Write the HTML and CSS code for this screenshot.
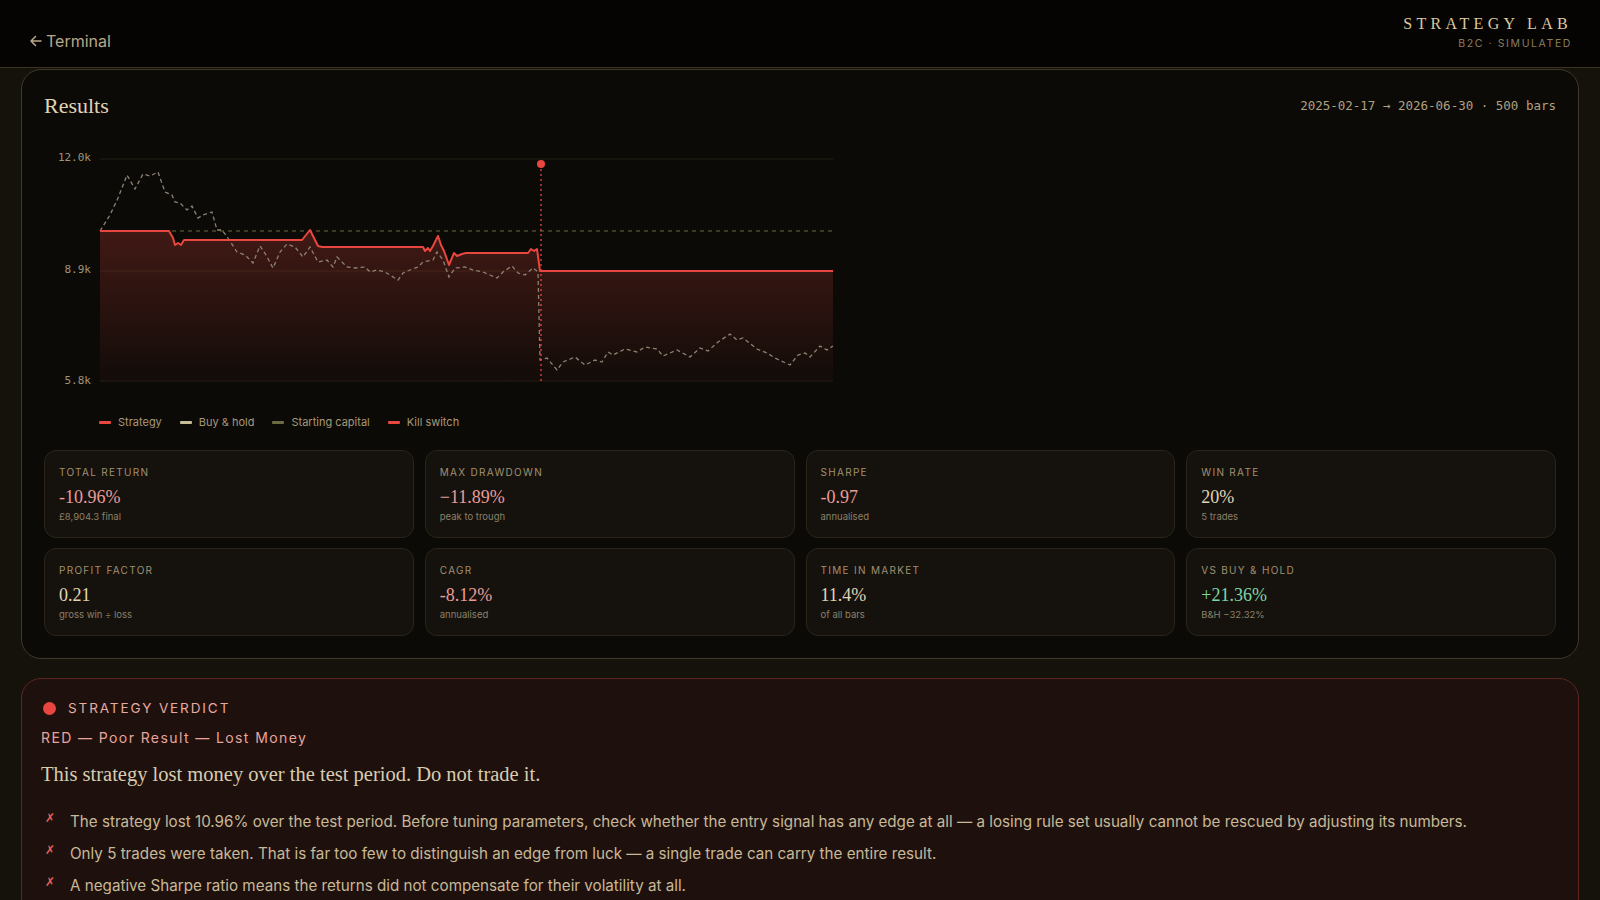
FILE: index.html
```html
<!DOCTYPE html>
<html lang="en">
<head>
    <meta charset="UTF-8">
    <title>Strategy Lab - Results</title>
    <link rel="stylesheet" href="styles.css">
</head>
<body>
    <header class="topbar">
        <a class="back-link" href="#">
            <svg width="14" height="14" viewBox="0 0 14 14"><path d="M12 7H2M6.5 2.5L2 7l4.5 4.5" fill="none" stroke="currentColor" stroke-width="1.5" stroke-linecap="round" stroke-linejoin="round"/></svg>
            Terminal
        </a>
        <div class="brand">
            <div class="brand-name">STRATEGY LAB</div>
            <div class="brand-sub">B2C · SIMULATED</div>
        </div>
    </header>

    <main class="page">
        <section class="results">
            <div class="results-head">
                <h2>Results</h2>
                <span class="range">2025-02-17 → 2026-06-30 · 500 bars</span>
            </div>

            <svg class="chart" width="800" height="250" viewBox="44 145 800 250">
                <defs>
                    <linearGradient id="fill-red" x1="0" y1="0" x2="0" y2="1">
                        <stop offset="0%" stop-color="#d9443c" stop-opacity="0.26"/>
                        <stop offset="100%" stop-color="#d9443c" stop-opacity="0.03"/>
                    </linearGradient>
                </defs>
                <line class="grid" x1="100" y1="159" x2="833" y2="159"/>
                <line class="grid" x1="100" y1="271" x2="833" y2="271"/>
                <line class="grid" x1="100" y1="381" x2="833" y2="381"/>
                <text class="axis" x="91" y="161">12.0k</text>
                <text class="axis" x="91" y="273">8.9k</text>
                <text class="axis" x="91" y="384">5.8k</text>

                <path class="area" d="M100,231 L169,231 L173,238 L175,245 L178,243 L181,245 L184,240 L302,240 L310,230 L318,246 L322,247 L423,247 L425,251 L428,248 L430,251 L433,246 L438,236 L441,245 L444,251 L449,265 L454,253 L457,256 L462,254 L466,253 L528,253 L531,249 L534,251 L537,249 L540,271 L833,271 L833,381 L100,381 Z"/>
                <line class="capital" x1="100" y1="231" x2="833" y2="231"/>
                <polyline class="hold" points="100,231 110,215 118,198 127,175 135,189 143,174 150,176 158,172 165,192 172,195 175,202 180,203 187,210 192,206 198,218 203,215 212,212 217,230 222,230 228,238 237,252 245,255 253,263 260,246 266,255 273,268 280,252 287,244 295,247 303,257 310,247 318,262 327,260 333,267 337,257 347,267 355,268 365,267 370,272 377,270 385,272 390,275 398,280 403,273 410,270 418,267 423,262 433,260 437,252 443,260 449,277 455,268 465,267 473,270 483,272 490,275 497,278 503,272 512,266 518,273 525,275 533,268 538,272 540,360 547,358 557,370 563,362 575,357 585,365 595,360 602,362 608,352 613,355 625,349 637,352 645,347 657,349 663,356 677,350 690,357 700,348 708,351 718,342 730,334 737,340 743,338 757,349 767,353 775,358 790,365 798,355 805,353 810,357 820,346 827,350 833,346"/>
                <polyline class="strategy" points="100,231 169,231 173,238 175,245 178,243 181,245 184,240 302,240 310,230 318,246 322,247 423,247 425,251 428,248 430,251 433,246 438,236 441,245 444,251 449,265 454,253 457,256 462,254 466,253 528,253 531,249 534,251 537,249 540,271 833,271"/>
                <line class="kill" x1="541" y1="164" x2="541" y2="381"/>
                <circle cx="541" cy="164" r="4" fill="#e8463f"/>
            </svg>

            <div class="legend">
                <span class="legend-item"><i class="swatch swatch-strategy"></i>Strategy</span>
                <span class="legend-item"><i class="swatch swatch-hold"></i>Buy &amp; hold</span>
                <span class="legend-item"><i class="swatch swatch-capital"></i>Starting capital</span>
                <span class="legend-item"><i class="swatch swatch-kill"></i>Kill switch</span>
            </div>

            <div class="metrics">
                <div class="metric">
                    <div class="metric-label">TOTAL RETURN</div>
                    <div class="metric-value negative">-10.96%</div>
                    <div class="metric-sub">£8,904.3 final</div>
                </div>
                <div class="metric">
                    <div class="metric-label">MAX DRAWDOWN</div>
                    <div class="metric-value negative">−11.89%</div>
                    <div class="metric-sub">peak to trough</div>
                </div>
                <div class="metric">
                    <div class="metric-label">SHARPE</div>
                    <div class="metric-value negative">-0.97</div>
                    <div class="metric-sub">annualised</div>
                </div>
                <div class="metric">
                    <div class="metric-label">WIN RATE</div>
                    <div class="metric-value">20%</div>
                    <div class="metric-sub">5 trades</div>
                </div>
                <div class="metric">
                    <div class="metric-label">PROFIT FACTOR</div>
                    <div class="metric-value">0.21</div>
                    <div class="metric-sub">gross win ÷ loss</div>
                </div>
                <div class="metric">
                    <div class="metric-label">CAGR</div>
                    <div class="metric-value negative">-8.12%</div>
                    <div class="metric-sub">annualised</div>
                </div>
                <div class="metric">
                    <div class="metric-label">TIME IN MARKET</div>
                    <div class="metric-value">11.4%</div>
                    <div class="metric-sub">of all bars</div>
                </div>
                <div class="metric">
                    <div class="metric-label">VS BUY &amp; HOLD</div>
                    <div class="metric-value positive">+21.36%</div>
                    <div class="metric-sub">B&amp;H −32.32%</div>
                </div>
            </div>
        </section>

        <section class="verdict">
            <div class="verdict-title"><span class="verdict-dot"></span>STRATEGY VERDICT</div>
            <div class="verdict-grade">RED — Poor Result — Lost Money</div>
            <p class="verdict-summary">This strategy lost money over the test period. Do not trade it.</p>
            <ul class="verdict-notes">
                <li>The strategy lost 10.96% over the test period. Before tuning parameters, check whether the entry signal has any edge at all — a losing rule set usually cannot be rescued by adjusting its numbers.</li>
                <li>Only 5 trades were taken. That is far too few to distinguish an edge from luck — a single trade can carry the entire result.</li>
                <li>A negative Sharpe ratio means the returns did not compensate for their volatility at all.</li>
            </ul>
        </section>
    </main>
</body>
</html>
```

FILE: styles.css
```css
:root {
    --bg: #15120c;
    --panel: #0c0a07;
    --card: #15120d;
    --gold-line: #40382a;
    --cream: #e0d4b4;
    --tan: #b3a484;
    --muted: #8c8068;
    --red: #e8463f;
    --pink: #e89c98;
    --green: #7fd4a8;
}

* {
    margin: 0;
    padding: 0;
    box-sizing: border-box;
}

body {
    background-color: var(--bg);
    font-family: 'Inter', 'Noto Sans', sans-serif;
    color: var(--tan);
    overflow: hidden;
}

.topbar {
    height: 68px;
    background-color: #050403;
    border-bottom: 1px solid #3a3322;
    display: flex;
    justify-content: space-between;
    align-items: center;
    padding: 0 28px 0 29px;
}

.back-link {
    display: flex;
    align-items: center;
    gap: 3px;
    color: #b8a888;
    text-decoration: none;
    font-size: 16px;
    margin-top: 14px;
}

.brand {
    text-align: right;
    margin-top: -2px;
}

.brand-name {
    font-family: 'Liberation Serif', serif;
    font-size: 16px;
    letter-spacing: 4.3px;
    color: #dcc9a0;
    line-height: 20px;
}

.brand-sub {
    font-size: 10.5px;
    letter-spacing: 1.6px;
    color: #8a7c5c;
    line-height: 16px;
    margin-top: 2px;
}

.page {
    padding: 1px 21px 0;
}

.results {
    background-color: var(--panel);
    border: 1px solid var(--gold-line);
    border-radius: 20px;
    padding: 22px;
    height: 590px;
}

.results-head {
    display: flex;
    justify-content: space-between;
    align-items: center;
    height: 26px;
}

.results-head h2 {
    font-family: 'Liberation Serif', serif;
    font-weight: normal;
    font-size: 22px;
    color: var(--cream);
    margin-top: 2px;
}

.range {
    font-family: 'DejaVu Sans Mono', monospace;
    font-size: 12.5px;
    color: #b0a080;
}

.chart {
    display: block;
    margin-top: 27px;
}

.grid {
    stroke: #221d15;
    stroke-width: 1;
}

.axis {
    font-family: 'DejaVu Sans Mono', monospace;
    font-size: 11px;
    fill: #a09478;
    text-anchor: end;
}

.area {
    fill: url(#fill-red);
}

.capital {
    stroke: #6e6a40;
    stroke-width: 1.2;
    stroke-dasharray: 4 4;
}

.hold {
    fill: none;
    stroke: #8c8270;
    stroke-width: 1.3;
    stroke-dasharray: 4 3;
}

.strategy {
    fill: none;
    stroke: var(--red);
    stroke-width: 2;
    stroke-linejoin: round;
}

.kill {
    stroke: var(--red);
    stroke-width: 1.3;
    stroke-dasharray: 2 3;
}

.legend {
    display: flex;
    gap: 18px;
    padding-left: 55px;
    margin-top: 19px;
    font-size: 11px;
    line-height: 16px;
    color: #a89878;
}

.legend-item {
    display: flex;
    align-items: center;
    gap: 7px;
}

.swatch {
    display: inline-block;
    width: 12px;
    height: 3px;
    border-radius: 1px;
}

.swatch-strategy, .swatch-kill {
    background-color: var(--red);
}

.swatch-hold {
    background-color: #c8bc98;
}

.swatch-capital {
    background-color: #6e6a40;
}

.metrics {
    display: grid;
    grid-template-columns: repeat(4, 1fr);
    gap: 10px 11px;
    margin-top: 20px;
}

.metric {
    background-color: var(--card);
    border: 1px solid #2a2419;
    border-radius: 12px;
    height: 88px;
    padding: 14px 14px;
}

.metric-label {
    font-size: 10px;
    letter-spacing: 1.3px;
    color: #a09070;
    line-height: 14px;
}

.metric-value {
    font-family: 'Liberation Serif', serif;
    font-size: 18px;
    line-height: 24px;
    margin-top: 6px;
    color: var(--cream);
}

.metric-value.negative {
    color: var(--pink);
}

.metric-value.positive {
    color: var(--green);
}

.metric-sub {
    font-size: 9.5px;
    line-height: 14px;
    margin-top: 1px;
    color: var(--muted);
}

.verdict {
    margin-top: 19px;
    background-color: #1e110d;
    border: 1px solid #5e2520;
    border-radius: 20px;
    padding: 20px 19px;
    height: 300px;
}

.verdict-title {
    display: flex;
    align-items: center;
    gap: 12px;
    font-size: 13.5px;
    letter-spacing: 1.9px;
    line-height: 18px;
    color: #e8aaa0;
}

.verdict-dot {
    width: 13px;
    height: 13px;
    border-radius: 50%;
    background-color: var(--red);
    margin-left: 2px;
}

.verdict-grade {
    margin-top: 12px;
    font-size: 14px;
    letter-spacing: 1.4px;
    line-height: 18px;
    color: #e8a49c;
}

.verdict-summary {
    margin-top: 14px;
    font-family: 'Liberation Serif', serif;
    font-size: 20.5px;
    line-height: 26px;
    color: #d8ccb0;
}

.verdict-notes {
    list-style: none;
    margin-top: 19px;
}

.verdict-notes li {
    position: relative;
    padding-left: 29px;
    font-size: 15.2px;
    line-height: 32px;
    color: #c8b898;
}

.verdict-notes li::before {
    content: "✗";
    position: absolute;
    left: 4px;
    top: -4px;
    font-family: 'DejaVu Sans', sans-serif;
    font-size: 12px;
    color: #e8605a;
}
```
